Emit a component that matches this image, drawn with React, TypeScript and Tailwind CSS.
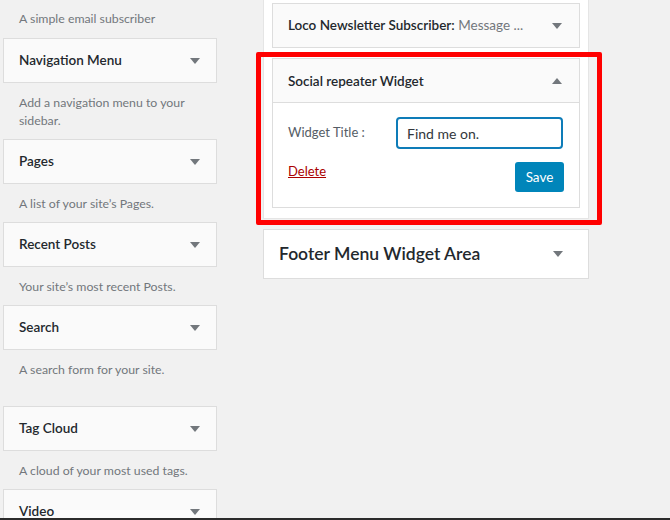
function Arrow({ up = false }: { up?: boolean }) {
  return (
    <svg width="10" height="6" viewBox="0 0 10 6" className="shrink-0">
      {up ? <path d="M0 6 L5 0 L10 6 Z" fill="#72777c" /> : <path d="M0 0 L10 0 L5 6 Z" fill="#72777c" />}
    </svg>
  );
}

interface Widget {
  title: string;
  desc: string[];
  extra?: boolean;
}

const widgets: Widget[] = [
  { title: "Navigation Menu", desc: ["Add a navigation menu to your", "sidebar."] },
  { title: "Pages", desc: ["A list of your site’s Pages."] },
  { title: "Recent Posts", desc: ["Your site’s most recent Posts."] },
  { title: "Search", desc: ["A search form for your site."], extra: true },
  { title: "Tag Cloud", desc: ["A cloud of your most used tags."] },
  { title: "Video", desc: [] },
];

function WidgetBox({ title }: { title: string }) {
  return (
    <div className="h-[45px] border border-[#dddddd] bg-[#fafafa] flex items-center justify-between pl-[15px] pr-[16px]">
      <span className="text-[13.5px] font-semibold text-[#23282d]">{title}</span>
      <Arrow />
    </div>
  );
}

export default function App() {
  return (
    <div className="relative h-[520px] w-[670px] overflow-hidden bg-[#f1f1f1] font-['Lato',sans-serif]">
      <div className="flex items-start">
        {/* available widgets */}
        <div className="ml-[3px] w-[214px]">
          <p className="pt-[10px] pb-[10px] pl-[16px] text-[12.3px] leading-[18px] text-[#72777c]">A simple email subscriber</p>
          {widgets.map((w) => (
            <div key={w.title}>
              <WidgetBox title={w.title} />
              {w.desc.length > 0 && (
                <div className={`pt-[11px] pl-[16px] text-[12.3px] leading-[18px] text-[#72777c] ${w.extra ? "pb-[27px]" : "pb-[9px]"}`}>
                  {w.desc.map((d) => (
                    <p key={d}>{d}</p>
                  ))}
                </div>
              )}
            </div>
          ))}
        </div>

        {/* sidebar area */}
        <div className="ml-[46px] w-[326px]">
          <div className="border-x border-b border-[#e5e5e5] bg-white px-[8px] pt-[3px] pb-[10px]">
            <div className="h-[45px] border border-[#dddddd] bg-[#fafafa] flex items-center justify-between pl-[15px] pr-[17px]">
              <span className="text-[13.5px] font-semibold text-[#23282d]">
                Loco Newsletter Subscriber:<span className="font-normal text-[#72777c]"> Message ...</span>
              </span>
              <Arrow />
            </div>
            <div className="mt-[10px] border border-[#dddddd] bg-white">
              <div className="h-[44px] border-b border-[#dddddd] bg-[#fafafa] flex items-center justify-between pl-[15px] pr-[17px]">
                <span className="mt-[1px] text-[13.5px] font-semibold text-[#23282d]">Social repeater Widget</span>
                <Arrow up />
              </div>
              <div className="px-[15px] pt-[14px] pb-[15px]">
                <div className="flex items-start">
                  <span className="mt-[6px] w-[108px] text-[13px] text-[#555d66]">Widget Title :</span>
                  <input
                    defaultValue="Find me on."
                    className="h-[32px] w-[167px] rounded-[4px] border-2 border-[#0e7cb8] bg-white px-[9px] text-[14px] text-[#32373c] outline-none"
                  />
                </div>
                <div className="mt-[13px] flex items-start justify-between">
                  <a href="#" className="text-[13px] leading-[18px] text-[#a00] underline">
                    Delete
                  </a>
                  <button className="h-[30px] w-[49px] rounded-[3px] bg-[#0085ba] text-[13.5px] text-white">Save</button>
                </div>
              </div>
            </div>
          </div>

          <div className="mt-[10px] h-[50px] border border-[#dddddd] bg-white flex items-center justify-between pl-[15px] pr-[25px]">
            <span className="text-[17.5px] font-semibold text-[#23282d]">Footer Menu Widget Area</span>
            <Arrow />
          </div>
        </div>
      </div>

      {/* highlight annotation */}
      <div className="absolute left-[256px] top-[52px] h-[173px] w-[346px] rounded-[2px] border-[5px] border-[#ff0000]" />

      <div className="absolute bottom-0 left-0 h-[2px] w-full bg-[#2b2b2b]" />
    </div>
  );
}
